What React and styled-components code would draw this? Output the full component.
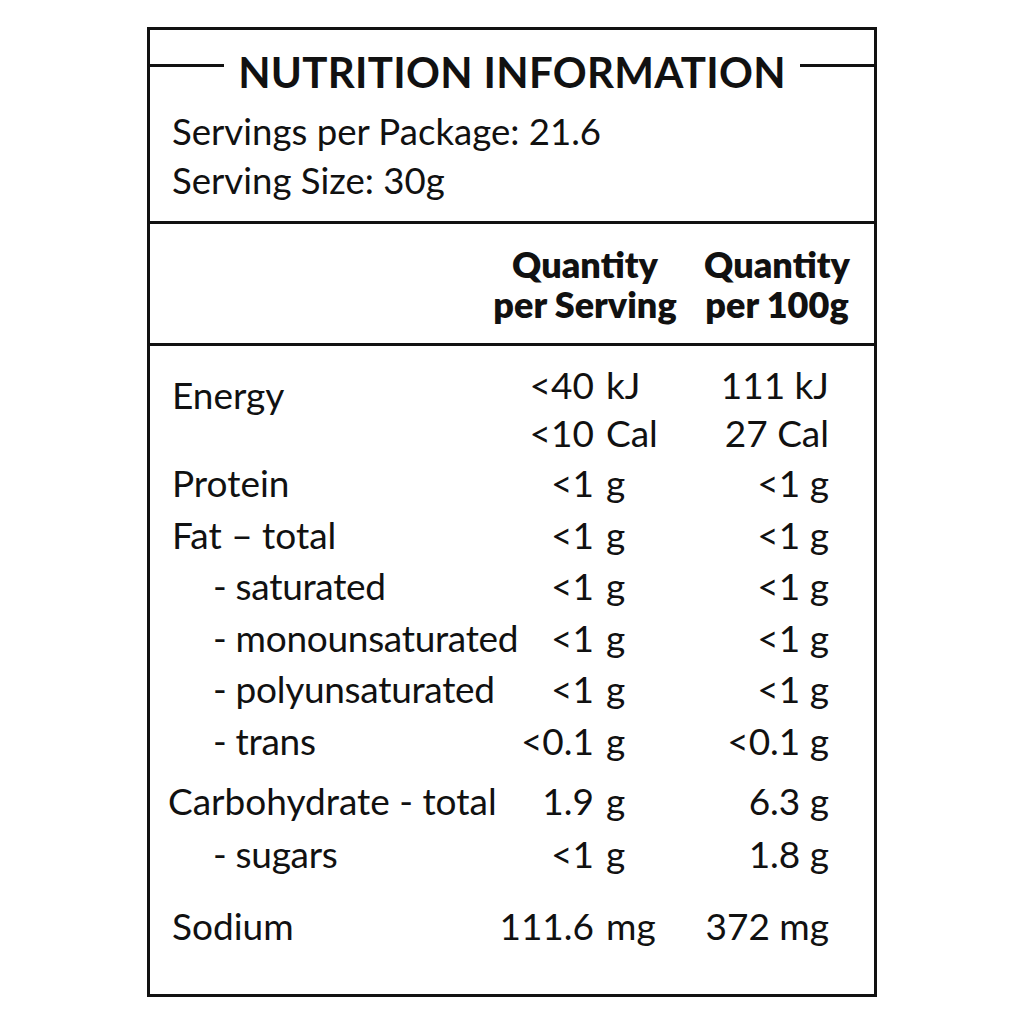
import React from "react";
import styled, { createGlobalStyle } from "styled-components";

const Global = createGlobalStyle`
  html, body { margin: 0; padding: 0; background: #ffffff; }
  body { font-family: "Lato", "Liberation Sans", sans-serif; color: #111111; }
`;

const Page = styled.div`
  width: 1024px;
  height: 1024px;
  box-sizing: border-box;
  padding: 27px 0 0 147px;
`;

const Panel = styled.div`
  width: 730px;
  height: 970px;
  box-sizing: border-box;
  border: 3px solid #111111;
  display: flex;
  flex-direction: column;
`;

const TopSection = styled.section`
  height: 194px;
  box-sizing: border-box;
  padding: 16px 0 0;
  border-bottom: 3px solid #111111;
`;

const TitleRow = styled.div`
  display: flex;
  align-items: center;
  gap: 14px;
  height: 52px;
  padding-left: 8px;
  &::before, &::after {
    content: "";
    flex: 1;
    height: 3px;
    background: #111111;
    margin-top: -13px;
  }
  &::before { margin-left: -8px; }
`;

const Title = styled.h1`
  margin: 0;
  font-size: 42px;
  font-weight: 700;
  letter-spacing: 0.3px;
  line-height: 52px;
  white-space: nowrap;
`;

const ServingInfo = styled.div`
  margin-top: 9px;
  padding-left: 22px;
  font-size: 36.6px;
  line-height: 49px;
`;

const HeaderSection = styled.section`
  height: 122px;
  box-sizing: border-box;
  padding: 20px 0 0;
  border-bottom: 3px solid #111111;
  display: flex;
`;

const HeaderCell = styled.div`
  margin-left: ${(p) => p.$left}px;
  width: ${(p) => p.$width}px;
  text-align: center;
  font-size: 36px;
  font-weight: 800;
  line-height: 40px;
  white-space: nowrap;
`;

const Body = styled.section`
  flex: 1;
  padding: 15px 0 0 22px;
`;

const Row = styled.div`
  display: grid;
  grid-template-columns: 316px 106px 12px 70px 153px;
  font-size: 37px;
  line-height: ${(p) => p.$lh || 51.5}px;
  margin-top: ${(p) => p.$mt || 0}px;
  white-space: nowrap;
`;

const Label = styled.div`
  grid-column: 1;
  padding-left: ${(p) => (p.$indent ? 41 : 0)}px;
  margin-left: ${(p) => p.$shift || 0}px;
  padding-top: ${(p) => p.$pt || 0}px;
  grid-row: span ${(p) => p.$span || 1};
  letter-spacing: ${(p) => (p.$indent ? -0.3 : 0)}px;
`;

const Num = styled.div`
  grid-column: 2;
  text-align: right;
`;

const Unit = styled.div`
  grid-column: 4;
  text-align: left;
`;

const Per100 = styled.div`
  grid-column: 5;
  text-align: right;
`;

const rows = [
  { label: "Protein", v: ["<1", "g"], w: "<1 g" },
  { label: "Fat – total", v: ["<1", "g"], w: "<1 g" },
  { label: "- saturated", indent: true, v: ["<1", "g"], w: "<1 g" },
  { label: "- monounsaturated", indent: true, v: ["<1", "g"], w: "<1 g" },
  { label: "- polyunsaturated", indent: true, v: ["<1", "g"], w: "<1 g" },
  { label: "- trans", indent: true, v: ["<0.1", "g"], w: "<0.1 g" },
];

export default function App() {
  return (
    <>
      <Global />
      <Page>
        <Panel>
          <TopSection>
            <TitleRow>
              <Title>NUTRITION INFORMATION</Title>
            </TitleRow>
            <ServingInfo>
              <div>Servings per Package: 21.6</div>
              <div>Serving Size: 30g</div>
            </ServingInfo>
          </TopSection>
          <HeaderSection>
            <HeaderCell $left={340} $width={190}>
              Quantity
              <br />
              per Serving
            </HeaderCell>
            <HeaderCell $left={0} $width={194}>
              Quantity
              <br />
              per 100g
            </HeaderCell>
          </HeaderSection>
          <Body>
            <Row $lh={48}>
              <Label $span={2} $pt={10}>Energy</Label>
              <Num>&lt;40</Num>
              <Unit>kJ</Unit>
              <Per100>111 kJ</Per100>
              <Num>&lt;10</Num>
              <Unit>Cal</Unit>
              <Per100>27 Cal</Per100>
            </Row>
            {rows.map((r) => (
              <Row key={r.label}>
                <Label $indent={r.indent}>{r.label}</Label>
                <Num>{r.v[0]}</Num>
                <Unit>{r.v[1]}</Unit>
                <Per100>{r.w}</Per100>
              </Row>
            ))}
            <Row $mt={9}>
              <Label $shift={-4}>Carbohydrate - total</Label>
              <Num>1.9</Num>
              <Unit>g</Unit>
              <Per100>6.3 g</Per100>
            </Row>
            <Row $mt={1.5}>
              <Label $indent>- sugars</Label>
              <Num>&lt;1</Num>
              <Unit>g</Unit>
              <Per100>1.8 g</Per100>
            </Row>
            <Row $mt={20}>
              <Label>Sodium</Label>
              <Num>111.6</Num>
              <Unit>mg</Unit>
              <Per100>372 mg</Per100>
            </Row>
          </Body>
        </Panel>
      </Page>
    </>
  );
}
